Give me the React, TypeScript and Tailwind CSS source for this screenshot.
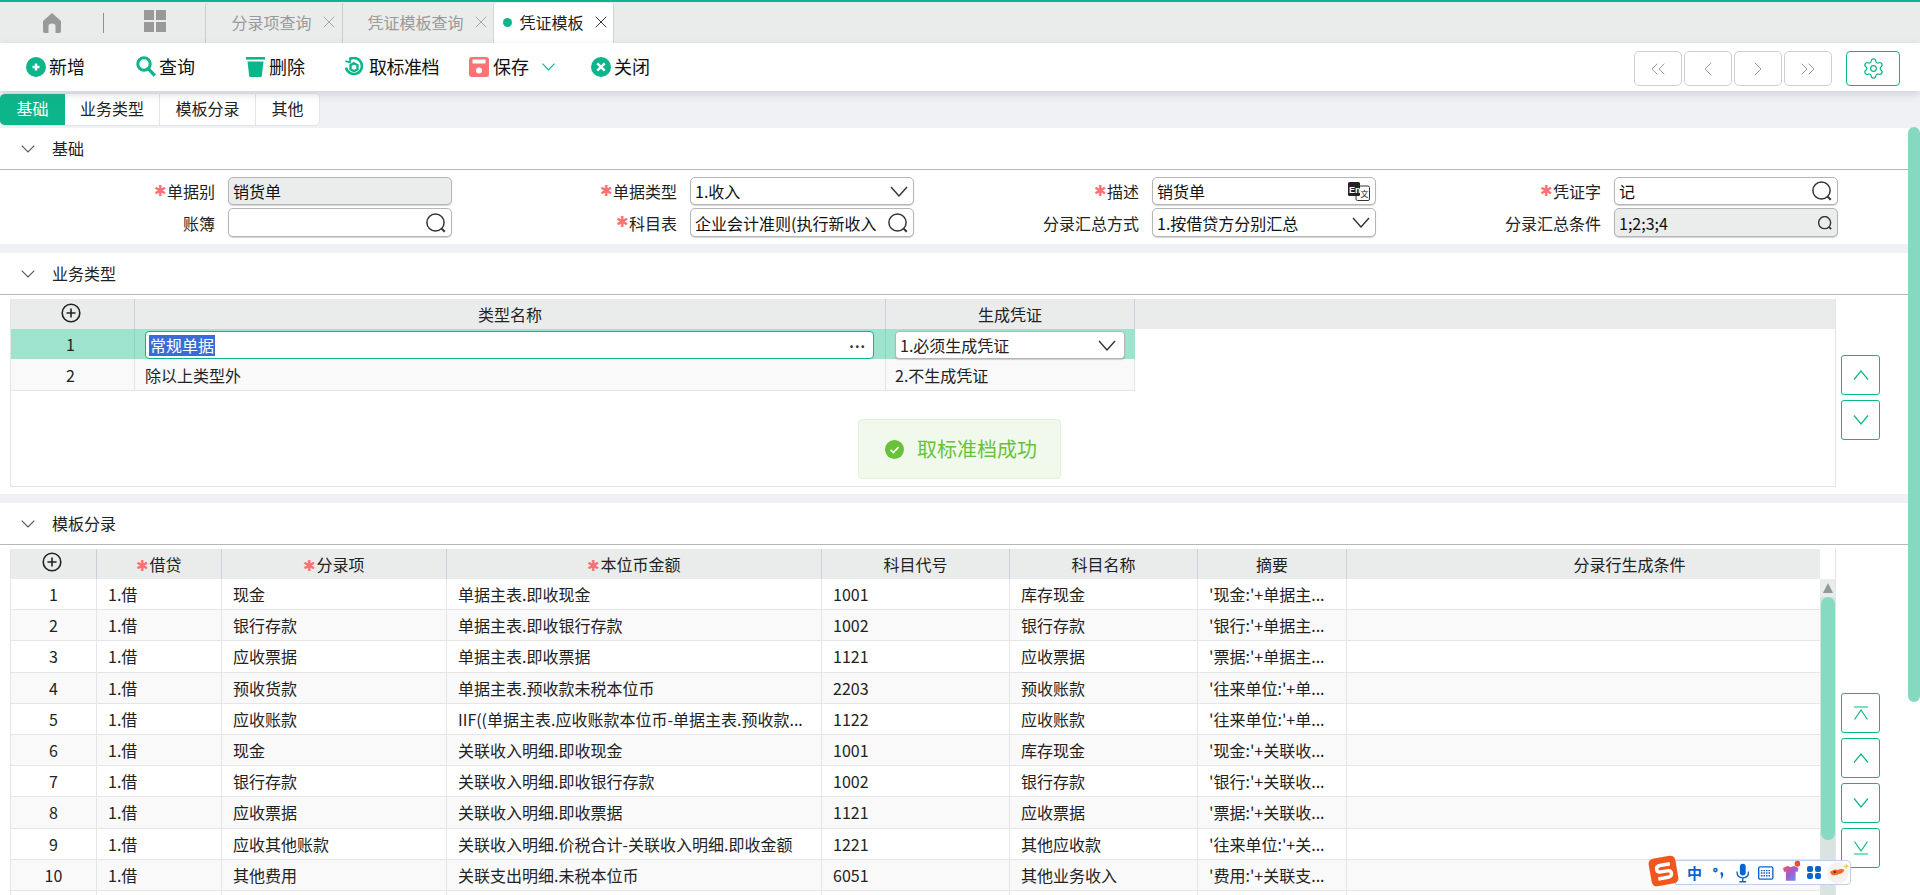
import React from "react";
import { ChevronsLeft, ChevronLeft, ChevronRight, ChevronsRight, Settings, X } from "lucide-react";

const G = "#0db58a";

function Magnifier({ small = false }: { small?: boolean }) {
  const s = small ? 14 : 20;
  return (
    <svg width={s} height={s} viewBox="0 0 20 20" fill="none" stroke="#333" strokeWidth={small ? 2 : 1.5} className="shrink-0">
      <circle cx="9.5" cy="9.5" r="8.6" />
      <path d="M15.6 15.6 L18.8 18.8" strokeWidth={small ? 2.4 : 2} />
    </svg>
  );
}

function Caret() {
  return (
    <svg width="18" height="11" viewBox="0 0 18 11" fill="none" stroke="#333" strokeWidth="1.4" className="shrink-0">
      <path d="M1 1 L9 10 L17 1" />
    </svg>
  );
}

function Fold() {
  return (
    <svg width="14" height="8" viewBox="0 0 14 8" fill="none" stroke="#555" strokeWidth="1.1" className="shrink-0">
      <path d="M0.7 0.7 L7 7 L13.3 0.7" />
    </svg>
  );
}

function PlusCircle({ cls = "" }: { cls?: string }) {
  return (
    <svg width="20" height="20" viewBox="0 0 20 20" fill="none" stroke="#222" className={cls}>
      <circle cx="10" cy="10" r="8.8" strokeWidth="1.6" />
      <path d="M10 5.5 V14.5 M5.5 10 H14.5" strokeWidth="1.6" />
    </svg>
  );
}

function EnIcon() {
  return (
    <svg width="22" height="19" viewBox="0 0 22 19" className="shrink-0">
      <rect x="8" y="4" width="13.5" height="14.5" rx="1.5" fill="#fff" stroke="#333" />
      <rect x="0" y="0" width="12" height="14" rx="1.5" fill="#222" />
      <text x="1" y="10.5" fontSize="9" fontWeight="700" fill="#fff" fontFamily="Liberation Sans">En</text>
      <text x="12.5" y="14.5" fontSize="8" fill="#222" fontFamily="Noto Sans CJK SC">文</text>
    </svg>
  );
}

function Star({ cls = "" }: { cls?: string }) {
  return <span className={"text-[#fb7176] text-[15px] leading-[15px] " + cls}>✱</span>;
}

function Label({ text, req = false }: { text: string; req?: boolean }) {
  return (
    <div className="flex items-center justify-end pr-[13px] text-[16px] leading-[24px] text-[#222] whitespace-nowrap">
      {req && <Star cls="-mt-[4px]" />}
      {text}
    </div>
  );
}

function Field({ text = "", disabled = false, icon = null }: { text?: string; disabled?: boolean; icon?: React.ReactNode }) {
  return (
    <div
      className={
        "flex items-center justify-between overflow-hidden pl-[4px] pr-[5px] border border-[#b5b5b5] rounded-[5px] shadow-[0_1px_1px_rgba(0,0,0,0.18)] text-[16px] text-[#111] whitespace-nowrap " +
        (disabled ? "bg-[#ebedec]" : "bg-white")
      }
    >
      <span className="overflow-hidden">{text}</span>
      {icon}
    </div>
  );
}

function Section({ title, children }: { title: string; children: React.ReactNode }) {
  return (
    <section className="bg-white">
      <div className="h-[42px] flex items-center pl-[21px] border-b border-[#b8b8b8] text-[16px] text-[#222]">
        <Fold />
        <span className="ml-[17px] -mt-[2px]">{title}</span>
      </div>
      {children}
    </section>
  );
}

function SideBtn({ children }: { children: React.ReactNode }) {
  return (
    <div className="w-[39px] h-[40px] flex items-center justify-center border border-[#0db58a] rounded-[3px] text-[#0db58a] bg-white">
      {children}
    </div>
  );
}

function Up() {
  return (
    <svg width="16" height="10" viewBox="0 0 16 10" fill="none" stroke="#0db58a" strokeWidth="1.2">
      <path d="M1 9.5 L8 1 L15 9.5" />
    </svg>
  );
}

function Down() {
  return (
    <svg width="16" height="10" viewBox="0 0 16 10" fill="none" stroke="#0db58a" strokeWidth="1.2">
      <path d="M1 0.5 L8 9 L15 0.5" />
    </svg>
  );
}

function NavBtn({ children }: { children: React.ReactNode }) {
  return (
    <div className="w-[48px] h-[35px] flex items-center justify-center border border-[#cfcfcf] rounded-[5px] text-[#9a9a9a] bg-white">
      {children}
    </div>
  );
}

const gridCols = "grid grid-cols-[86px_125px_225px_375px_188px_188px_149px_473px]";

const rows = [
  ["1", "1.借", "现金", "单据主表.即收现金", "1001", "库存现金", "'现金:'+单据主..."],
  ["2", "1.借", "银行存款", "单据主表.即收银行存款", "1002", "银行存款", "'银行:'+单据主..."],
  ["3", "1.借", "应收票据", "单据主表.即收票据", "1121", "应收票据", "'票据:'+单据主..."],
  ["4", "1.借", "预收货款", "单据主表.预收款未税本位币", "2203", "预收账款", "'往来单位:'+单..."],
  ["5", "1.借", "应收账款", "IIF((单据主表.应收账款本位币-单据主表.预收款...", "1122", "应收账款", "'往来单位:'+单..."],
  ["6", "1.借", "现金", "关联收入明细.即收现金", "1001", "库存现金", "'现金:'+关联收..."],
  ["7", "1.借", "银行存款", "关联收入明细.即收银行存款", "1002", "银行存款", "'银行:'+关联收..."],
  ["8", "1.借", "应收票据", "关联收入明细.即收票据", "1121", "应收票据", "'票据:'+关联收..."],
  ["9", "1.借", "应收其他账款", "关联收入明细.价税合计-关联收入明细.即收金额", "1221", "其他应收款", "'往来单位:'+关..."],
  ["10", "1.借", "其他费用", "关联支出明细.未税本位币", "6051", "其他业务收入", "'费用:'+关联支..."],
  ["", "", "", "", "", "", ""],
];

function Th({ text, req = false }: { text: string; req?: boolean }) {
  return (
    <div className="flex items-center justify-center border-r border-[#c9cfdc] text-[16px] whitespace-nowrap">
      {req && <Star />}
      {text}
    </div>
  );
}

export default function App() {
  return (
    <div className="relative w-[1920px] h-[895px] overflow-hidden bg-[#eff1f5] text-[#222] font-['Noto_Sans_CJK_SC','Liberation_Sans',sans-serif]">
      {/* tab strip */}
      <div className="h-[43px] border-t-2 border-[#10b48c] bg-[#e9eceb] flex items-stretch">
        <div className="flex items-center pl-[43px]">
          <svg width="18" height="20" viewBox="0 0 18 20" fill="#999">
            <path d="M9 0 L18 8 V18 Q18 20 16 20 H12.5 V13 Q12.5 10.5 9 10.5 Q5.5 10.5 5.5 13 V20 H2 Q0 20 0 18 V8 Z" />
          </svg>
          <div className="w-px h-[20px] bg-[#8f8f8f] ml-[42px]" />
          <div className="ml-[40px] mb-[3px] grid grid-cols-[10px_10px] grid-rows-[10px_10px] gap-[1.5px]">
            <div className="bg-[#999]" />
            <div className="bg-[#999]" />
            <div className="bg-[#999]" />
            <div className="bg-[#999]" />
          </div>
        </div>
        <div className="ml-[39px] flex items-stretch text-[16px] text-[#9a9a9a]">
          <div className="w-[137px] flex items-center pl-[26px] pb-[2px] border-l border-[#c9cfcf] rounded-tl-[3px] mt-px">
            分录项查询
            <X size={20} strokeWidth={1} className="ml-[7px]" />
          </div>
          <div className="w-[151px] flex items-center pl-[25px] pb-[2px] border-l border-[#c9cfcf] mt-px">
            凭证模板查询
            <X size={20} strokeWidth={1} className="ml-[7px]" />
          </div>
          <div className="w-[121px] flex items-center pl-[9px] pb-[2px] bg-white border-x border-[#d0d5d5] text-[#222] mt-px rounded-t-[3px]">
            <span className="w-[9px] h-[9px] rounded-full bg-[#10b48c] mr-[8px]" />
            凭证模板
            <X size={20} strokeWidth={1.1} className="ml-[7px]" />
          </div>
        </div>
      </div>

      {/* toolbar */}
      <div className="relative z-10 h-[48px] bg-white pt-[3px] pl-[26px] pr-[20px] flex items-center text-[18px] text-[#111] shadow-[0_3px_8px_rgba(120,125,140,0.28)]">
        <div className="flex items-center pb-[4px]">
          <div className="flex items-center">
            <svg width="20" height="20" viewBox="0 0 20 20">
              <circle cx="10" cy="10" r="10" fill={G} />
              <path d="M10 6.5 V13.5 M6.5 10 H13.5" stroke="#fff" strokeWidth="2.4" />
            </svg>
            <span className="ml-[3px]">新增</span>
          </div>
          <div className="flex items-center ml-[51px]">
            <svg width="20" height="21" viewBox="0 0 20 21" fill="none" stroke={G}>
              <circle cx="8" cy="8" r="6.2" strokeWidth="3" />
              <path d="M12.5 12.8 L18.8 19.6" strokeWidth="3.2" />
            </svg>
            <span className="ml-[3px]">查询</span>
          </div>
          <div className="flex items-center ml-[51px]">
            <svg width="19" height="20" viewBox="0 0 19 20" fill={G}>
              <rect x="0" y="0" width="19" height="2.6" />
              <path d="M1.5 4.5 H17.5 L15.8 19 Q15.7 20 14.7 20 H4.3 Q3.3 20 3.2 19 Z" />
            </svg>
            <span className="ml-[4px]">删除</span>
          </div>
          <div className="flex items-center ml-[40px]">
            <svg width="18" height="20" viewBox="0 0 18 20" fill="none" stroke={G}>
              <path d="M4.4 2.4 A8 8 0 1 1 1 10.5" strokeWidth="2.6" />
              <path d="M5.5 0.4 L5 5.4 L0.4 4.2" strokeWidth="1.8" />
              <path d="M9 6.2 L12.5 8.2 V12.2 L9 14.2 L5.5 12.2 V8.2 Z" strokeWidth="2.4" />
            </svg>
            <span className="ml-[6px] tracking-[-0.5px]">取标准档</span>
          </div>
          <div className="flex items-center ml-[30px]">
            <svg width="20" height="20" viewBox="0 0 20 20">
              <rect width="20" height="20" rx="3" fill="#fc7277" />
              <rect x="3.5" y="2.5" width="13" height="4" fill="#fff" />
              <circle cx="10" cy="13.5" r="3" fill="#fff" />
            </svg>
            <span className="ml-[4px]">保存</span>
          </div>
          <svg width="13" height="8" viewBox="0 0 13 8" fill="none" stroke={G} strokeWidth="1.1" className="ml-[13px]">
            <path d="M0.5 0.7 L6.5 7 L12.5 0.7" />
          </svg>
          <div className="flex items-center ml-[36px]">
            <svg width="20" height="20" viewBox="0 0 20 20">
              <circle cx="10" cy="10" r="10" fill={G} />
              <path d="M6.3 6.3 L13.7 13.7 M13.7 6.3 L6.3 13.7" stroke="#fff" strokeWidth="2.4" />
            </svg>
            <span className="ml-[3px]">关闭</span>
          </div>
        </div>
        <div className="ml-auto flex items-center gap-[2px]">
          <NavBtn><ChevronsLeft size={24} strokeWidth={1} /></NavBtn>
          <NavBtn><ChevronLeft size={24} strokeWidth={1} /></NavBtn>
          <NavBtn><ChevronRight size={24} strokeWidth={1} /></NavBtn>
          <NavBtn><ChevronsRight size={24} strokeWidth={1} /></NavBtn>
          <div className="ml-[12px] w-[54px] h-[35px] flex items-center justify-center border border-[#0db58a] rounded-[4px] text-[#0db58a]">
            <Settings size={23} strokeWidth={1.3} />
          </div>
        </div>
      </div>

      {/* sub tabs */}
      <div className="h-[37px] pt-[2px]">
        <div className="inline-flex h-[33px] bg-white rounded-[5px] border border-[#e3e5e8] border-l-0 text-[16px] text-[#222] overflow-hidden">
          <div className="w-[65px] flex items-center justify-center pb-[3px] bg-[#0db58a] text-white">基础</div>
          <div className="w-[95px] flex items-center justify-center pb-[3px] border-r border-[#e3e5e8]">业务类型</div>
          <div className="w-[96px] flex items-center justify-center pb-[3px] border-r border-[#e3e5e8]">模板分录</div>
          <div className="w-[63px] flex items-center justify-center pb-[3px]">其他</div>
        </div>
      </div>

      {/* sections */}
      <div className="flex flex-col gap-[9px]">
        <Section title="基础">
          <div className="h-[74px] pt-[7px] grid grid-cols-[228px_224px_238px_224px_238px_224px_238px_224px] grid-rows-[28px_29px] gap-y-[3px]">
            <Label text="单据别" req />
            <Field text="销货单" disabled />
            <Label text="单据类型" req />
            <Field text="1.收入" icon={<Caret />} />
            <Label text="描述" req />
            <Field text="销货单" icon={<EnIcon />} />
            <Label text="凭证字" req />
            <Field text="记" icon={<Magnifier />} />
            <Label text="账簿" />
            <Field icon={<Magnifier />} />
            <Label text="科目表" req />
            <Field text="企业会计准则(执行新收入" icon={<Magnifier />} />
            <Label text="分录汇总方式" />
            <Field text="1.按借贷方分别汇总" icon={<Caret />} />
            <Label text="分录汇总条件" />
            <Field text="1;2;3;4" disabled icon={<Magnifier small />} />
          </div>
        </Section>

        <Section title="业务类型">
          <div className="h-[199px] pt-[4px] pl-[10px] flex items-start">
            <div className="w-[1826px] h-[188px] border-b border-r border-l border-[#e5e5e5]">
              <div className="h-[30px] bg-[#e9eceb] grid grid-cols-[124px_751px_249px_1fr]">
                <div className="flex items-center justify-center pr-[4px] border-r border-[#c9cfdc]"><PlusCircle cls="-mt-[3px]" /></div>
                <Th text="类型名称" />
                <Th text="生成凭证" />
                <div />
              </div>
              <div className="h-[30px] w-[1124px] bg-[#9ee3cd] grid grid-cols-[124px_751px_249px]">
                <div className="flex items-center justify-center pr-[4px] border-r border-[#8fd6c0] text-[16px]">1</div>
                <div className="pl-[10px] pr-[11px] pt-[2px] border-r border-[#8fd6c0]">
                  <div className="h-[28px] bg-white border border-[#0db58a] rounded-[4px] flex items-center justify-between pl-[3px] pr-[7px]">
                    <span className="bg-[#3a6cd6] text-white text-[16px] leading-[21px] px-px">常规单据</span>
                    <span className="text-[#333] text-[14px] font-bold leading-none tracking-[1px] -mt-[6px]">...</span>
                  </div>
                </div>
                <div className="pl-[9px] pr-[10px] pt-[2px]">
                  <div className="h-[28px] bg-white border border-[#b5b5b5] rounded-[4px] shadow-[0_1px_1px_rgba(0,0,0,0.18)] flex items-center justify-between pl-[4px] pr-[8px] text-[16px]">
                    1.必须生成凭证
                    <Caret />
                  </div>
                </div>
              </div>
              <div className="h-[32px] w-[1124px] bg-[#f9f9f9] grid grid-cols-[124px_751px_249px] border-b border-[#e5e5e5] text-[16px]">
                <div className="flex items-center justify-center pr-[4px] border-r border-[#e5e5e5]">2</div>
                <div className="flex items-center pl-[10px] border-r border-[#e5e5e5]">除以上类型外</div>
                <div className="flex items-center pl-[9px] border-r border-[#e5e5e5]">2.不生成凭证</div>
              </div>
            </div>
            <div className="ml-[5px] pt-[56px] flex flex-col gap-[5px]">
              <SideBtn><Up /></SideBtn>
              <SideBtn><Down /></SideBtn>
            </div>
          </div>
        </Section>

        <Section title="模板分录">
          <div className="h-[360px] pt-[4px] pl-[10px] flex items-start">
            <div className="w-[1826px] flex border-l border-[#e5e5e5]">
              <div className="w-[1809px]">
                <div className={gridCols + " h-[30px] bg-[#e9eceb]"}>
                  <div className="flex items-center justify-center pr-[4px] border-r border-[#c9cfdc]"><PlusCircle cls="-mt-[4px]" /></div>
                  <Th text="借贷" req />
                  <Th text="分录项" req />
                  <Th text="本位币金额" req />
                  <Th text="科目代号" />
                  <Th text="科目名称" />
                  <Th text="摘要" />
                  <div className="flex items-center justify-center pl-[92px] text-[16px]">分录行生成条件</div>
                </div>
                {rows.map((r, i) => (
                  <div key={i} className={gridCols + " h-[31.2px] border-b border-[#e6e6e6] text-[16px] leading-[24px] " + (i % 2 === 1 ? "bg-[#f9f9f9]" : "bg-white")}>
                    <div className="flex items-center justify-center border-r border-[#e6e6e6]">{r[0]}</div>
                    {r.slice(1).map((c, j) => (
                      <div key={j} className="flex items-center pl-[11px] border-r border-[#e6e6e6] whitespace-nowrap overflow-hidden">{c}</div>
                    ))}
                    <div />
                  </div>
                ))}
              </div>
              <div className="w-[16px] border-r border-[#e5e5e5]">
                <div className="h-[30px] bg-white" />
                <div className="relative h-[330px] bg-[#d9e3e0]">
                  <div className="h-[18px] flex items-center justify-center bg-[#e9eceb]">
                    <div className="w-0 h-0 border-x-[5px] border-x-transparent border-b-[10px] border-b-[#8f9996]" />
                  </div>
                  <div className="absolute top-[18px] left-px w-[14px] h-[243px] rounded-[7px] bg-[#87dac2]" />
                </div>
              </div>
            </div>
            <div className="ml-[5px] pt-[144px] flex flex-col gap-[5px]">
              <SideBtn>
                <svg width="16" height="14" viewBox="0 0 16 14" fill="none" stroke="#0db58a" strokeWidth="1.2"><path d="M1 1 H15 M1.5 13.5 L8 4 L14.5 13.5" /></svg>
              </SideBtn>
              <SideBtn><Up /></SideBtn>
              <SideBtn><Down /></SideBtn>
              <SideBtn>
                <svg width="16" height="14" viewBox="0 0 16 14" fill="none" stroke="#0db58a" strokeWidth="1.2"><path d="M1 13 H15 M1.5 0.5 L8 10 L14.5 0.5" /></svg>
              </SideBtn>
            </div>
          </div>
        </Section>
      </div>

      {/* page scrollbar */}
      <div className="absolute left-[1908px] top-[127px] w-[12px] h-[575px] rounded-[6px] bg-[#84d9c0]" />

      {/* toast */}
      <div className="absolute left-[858px] top-[419px] w-[203px] h-[60px] bg-[#f0f9eb] border border-[#e1f3d8] rounded-[4px] flex items-center pl-[26px] text-[#67c23a] text-[20px]">
        <svg width="19" height="19" viewBox="0 0 19 19">
          <circle cx="9.5" cy="9.5" r="9.5" fill="#67c23a" />
          <path d="M5.5 9.8 L8.4 12.6 L13.6 7" stroke="#fff" strokeWidth="1.7" fill="none" />
        </svg>
        <span className="ml-[13px] whitespace-nowrap">取标准档成功</span>
      </div>

      {/* IME bar */}
      <div className="absolute left-[1675px] top-[860px] w-[176px] h-[25px] bg-white border border-[#bcd0e8] rounded-r-[4px] flex items-center pl-[11px]">
        <span className="text-[#0b63ce] text-[15px] font-bold leading-none">中</span>
        <svg width="12" height="14" viewBox="0 0 12 14" className="ml-[11px]" fill="#0b63ce">
          <circle cx="2.5" cy="4" r="1.6" fill="none" stroke="#0b63ce" strokeWidth="1.6" />
          <path d="M8 6 Q11 6 10.5 9.5 Q10 12 8 13 Q9 10 8.5 9.5 Q7 9 8 6 Z" />
        </svg>
        <svg width="14" height="20" viewBox="0 0 14 20" className="ml-[11px]">
          <rect x="4" y="0.5" width="6" height="12" rx="3" fill="#0b63ce" />
          <path d="M1 8.5 Q1 15 7 15 Q13 15 13 8.5 M7 15 V18.5 M3.5 19 H10.5" fill="none" stroke="#0b63ce" strokeWidth="1.4" />
        </svg>
        <svg width="16" height="14" viewBox="0 0 16 14" className="ml-[9px]" fill="none" stroke="#0b63ce">
          <rect x="0.7" y="0.7" width="14.6" height="12.6" rx="1.5" strokeWidth="1.4" />
          <path d="M3 4.5 H13 M3 7 H13 M3 9.8 H13" strokeWidth="1.4" strokeDasharray="1.6 1" />
        </svg>
        <svg width="18" height="22" viewBox="0 0 18 22" className="ml-[9px] -mt-[4px]">
          <defs>
            <linearGradient id="shirt" x1="0" y1="0" x2="1" y2="1">
              <stop offset="0" stopColor="#ef5a4a" />
              <stop offset="0.5" stopColor="#a35ad8" />
              <stop offset="1" stopColor="#5aa0f0" />
            </linearGradient>
          </defs>
          <path d="M0 8 L5 5.5 Q8 8 11 5.5 L16 8 L15 12 L13 11.5 L13 21 H3 V11.5 L1 12 Z" fill="url(#shirt)" />
          <circle cx="15" cy="3.5" r="3" fill="#ee4b3a" />
        </svg>
        <div className="ml-[7px] grid grid-cols-[6px_6px] grid-rows-[6px_6px] gap-[1.5px]">
          <div className="bg-[#0b63ce] rounded-[2px]" />
          <div className="bg-[#0b63ce] rounded-[2px]" />
          <div className="bg-[#0b63ce] rounded-[2px]" />
          <div className="bg-[#0b63ce] rounded-[2px]" />
        </div>
        <svg width="24" height="24" viewBox="0 0 24 24" className="ml-[6px]">
          <circle cx="11" cy="12" r="11" fill="#f6f1ec" />
          <path d="M3 11 Q8 7 11 9 Q15 7 18 9 Q16 13 12 13 Q9 15 5 14 Z" fill="#ee6a2c" />
          <circle cx="8" cy="11" r="1" fill="#222" />
          <path d="M20 2 L21 4 L23 5 L21 6 L20 8 L19 6 L17 5 L19 4 Z" fill="#f5d34a" />
        </svg>
      </div>
      <div className="absolute left-[1650px] top-[857px] w-[27px] h-[28px] rounded-[5px] bg-[#f1561f] -rotate-[10deg] flex items-center justify-center">
        <svg width="18" height="19" viewBox="0 0 18 19" fill="none" stroke="#fff" strokeWidth="3.4">
          <path d="M16 3 H6 Q2 3 2 6.5 Q2 9.5 6 9.5 H12 Q16 9.5 16 12.5 Q16 16 12 16 H2" />
        </svg>
      </div>
    </div>
  );
}
